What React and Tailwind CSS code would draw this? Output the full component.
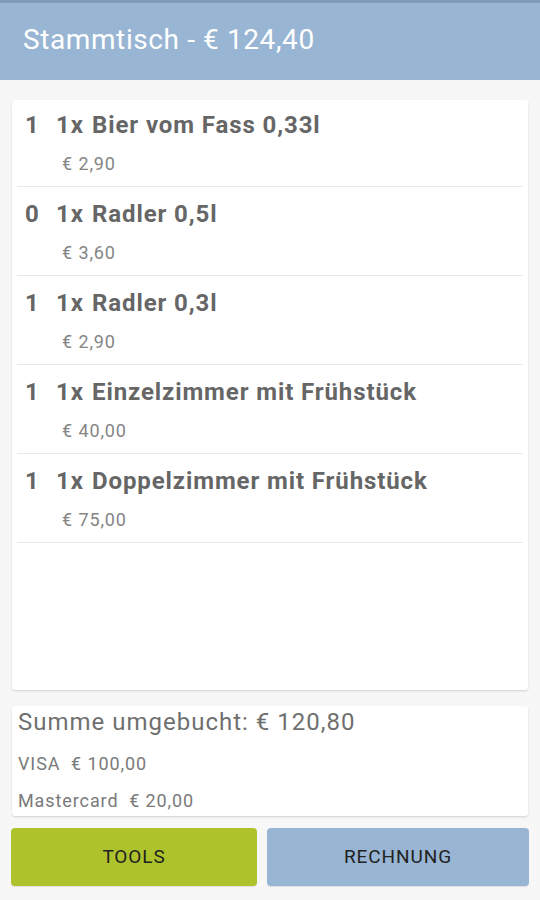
import React from "react";

const items = [
  { n: "1", name: "1x", title: "Bier vom Fass 0,33l", price: "€ 2,90" },
  { n: "0", name: "1x", title: "Radler 0,5l", price: "€ 3,60" },
  { n: "1", name: "1x", title: "Radler 0,3l", price: "€ 2,90" },
  { n: "1", name: "1x", title: "Einzelzimmer mit Frühstück", price: "€ 40,00" },
  { n: "1", name: "1x", title: "Doppelzimmer mit Frühstück", price: "€ 75,00" },
];

export default function App() {
  return (
    <div
      className="w-[540px] h-[900px] flex flex-col bg-[#f7f7f7] overflow-hidden"
      style={{ fontFamily: "Roboto, 'Noto Sans', sans-serif" }}
    >
      <div className="h-[3px] bg-[#7f9ab8]" />
      <div className="h-[77px] bg-[#98b5d3] flex items-center pl-[23px] pb-[3px]">
        <span className="text-white text-[28px] leading-none tracking-[0.6px]">
          Stammtisch - € 124,40
        </span>
      </div>
      <div className="flex-1 flex flex-col px-[12px] pt-[20px]">
        <div className="flex-1 bg-white rounded-[3px] shadow-[0_1px_2px_rgba(0,0,0,0.15)] px-[5px]">
          {items.map((it, i) => (
            <div
              key={i}
              className={`border-b border-[#e9e9e9] pb-[12px] pl-[8px] ${i === 0 ? "pt-[11px]" : "pt-[13px]"}`}
            >
              <div className="flex items-center h-[28px] text-[24px] font-bold text-[#666666] leading-[28px] tracking-[0.9px]">
                <span className="w-[31px]">{it.n}</span>
                <span className="w-[36px]">{it.name}</span>
                <span>{it.title}</span>
              </div>
              <div className="mt-[15px] pl-[37px] h-[20px] leading-[20px] text-[18px] text-[#858585] tracking-[0.9px]">
                {it.price}
              </div>
            </div>
          ))}
        </div>
        <div className="mt-[16px] h-[110px] bg-white rounded-[3px] shadow-[0_1px_2px_rgba(0,0,0,0.15)] px-[6px] pt-[1px]">
          <div className="mt-[1px] text-[24px] leading-[28px] text-[#6f6f6f] tracking-[1px]">
            Summe umgebucht: € 120,80
          </div>
          <div className="mt-[18px] text-[18px] leading-[20px] text-[#7a7a7a] tracking-[0.9px]">
            VISA&nbsp;&nbsp;€ 100,00
          </div>
          <div className="mt-[17px] text-[18px] leading-[20px] text-[#7a7a7a] tracking-[0.9px]">
            Mastercard&nbsp;&nbsp;€ 20,00
          </div>
        </div>
      </div>
      <div className="flex gap-[10px] px-[11px] pt-[12px] pb-[14px]">
        <button className="w-[246px] h-[58px] rounded-[4px] bg-[#aec22b] text-[19px] text-[#222222] tracking-[0.9px] shadow-[0_1px_1px_rgba(0,0,0,0.1)]">
          TOOLS
        </button>
        <button className="flex-1 h-[58px] rounded-[4px] bg-[#98b5d3] text-[19px] text-[#222222] tracking-[0.9px] shadow-[0_1px_1px_rgba(0,0,0,0.1)]">
          RECHNUNG
        </button>
      </div>
    </div>
  );
}
